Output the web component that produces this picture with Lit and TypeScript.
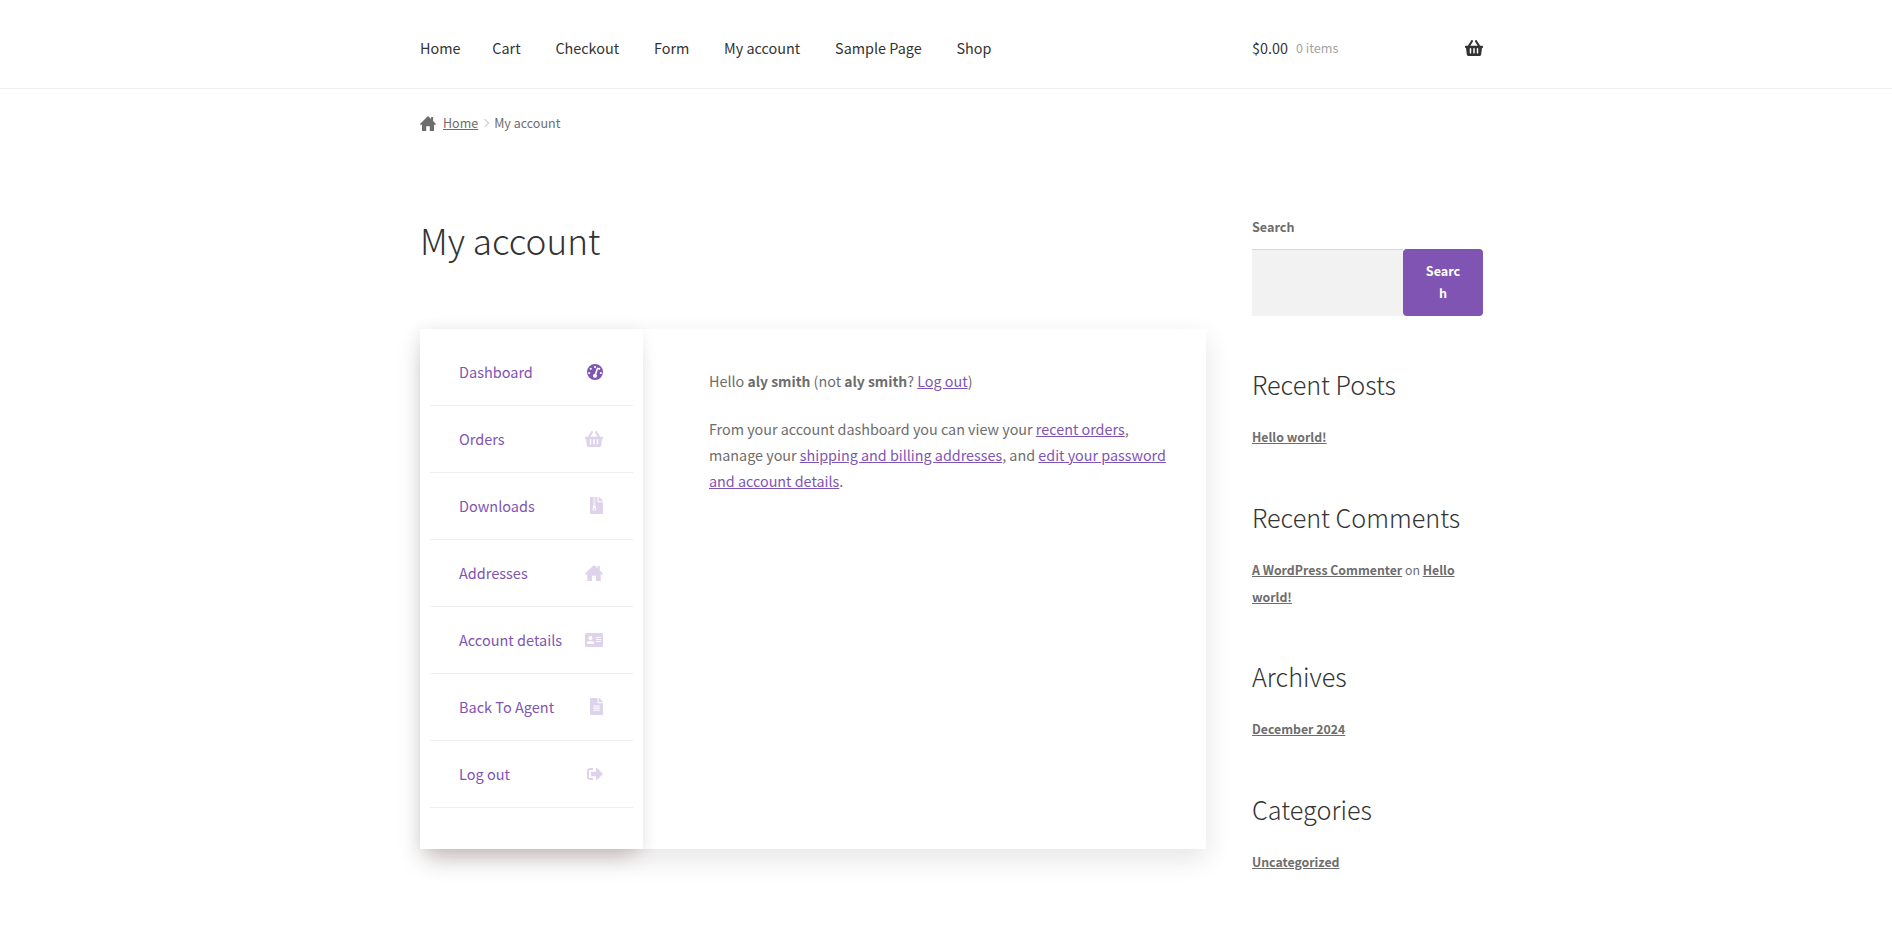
import { LitElement, css, html, svg } from "lit";
import { customElement } from "lit/decorators.js";

// font awesome 5 solid glyphs, home and gauge redrawn to match the older set
const ICONS: Record<string, { vb: string; d: any }> = {
  home: {
    vb: "0 32 576 448",
    d: svg`<path d="M288 32L400 124V60h72v122L576 268l-34 42-38-31V480H352V336H224V480H72V279l-38 31L0 268z"/>`,
  },
  basket: {
    vb: "0 32 576 448",
    d: svg`<path d="M576 216v16c0 13.255-10.745 24-24 24h-8l-26.113 182.788C514.509 462.435 494.257 480 470.37 480H105.63c-23.887 0-44.139-17.565-47.518-41.212L32 256h-8c-13.255 0-24-10.745-24-24v-16c0-13.255 10.745-24 24-24h67.341l106.78-146.821c10.395-14.292 30.407-17.453 44.701-7.058 14.293 10.395 17.453 30.408 7.058 44.701L170.477 192h235.046L326.12 82.821c-10.395-14.292-7.234-34.306 7.059-44.701 14.291-10.395 34.306-7.235 44.701 7.058L484.659 192H552c13.255 0 24 10.745 24 24zM312 392V280c0-13.255-10.745-24-24-24s-24 10.745-24 24v112c0 13.255 10.745 24 24 24s24-10.745 24-24zm112 0V280c0-13.255-10.745-24-24-24s-24 10.745-24 24v112c0 13.255 10.745 24 24 24s24-10.745 24-24zm-224 0V280c0-13.255-10.745-24-24-24s-24 10.745-24 24v112c0 13.255 10.745 24 24 24s24-10.745 24-24z"/>`,
  },
  gauge: {
    vb: "0 0 512 512",
    d: svg`<path fill-rule="evenodd" d="M256 0a256 256 0 1 0 0 512a256 256 0 1 0 0-512zM256 64a34 34 0 1 1 0 68a34 34 0 1 1 0-68zM120 120a34 34 0 1 1 0 68a34 34 0 1 1 0-68zM70 256a34 34 0 1 1 0 68a34 34 0 1 1 0-68zM442 256a34 34 0 1 1 0 68a34 34 0 1 1 0-68zM392 120a34 34 0 1 1 0 68a34 34 0 1 1 0-68zM345 112c14 5 21 20 16 33l-61 180c14 13 22 31 22 51c0 39-29 66-66 66s-66-29-66-66c0-34 26-62 60-65l62-183c5-13 20-21 33-16z"/>`,
  },
  archive: {
    vb: "0 0 384 512",
    d: svg`<path d="M377 105L279.1 7c-4.5-4.5-10.6-7-17-7H256v128h128v-6.1c0-6.3-2.5-12.4-7-16.9zM128.4 336c-17.9 0-32.4 12.1-32.4 27 0 15 14.6 27 32.5 27s32.4-12.1 32.4-27-14.6-27-32.5-27zM224 136V0h-63.6v32h-32V0H24C10.7 0 0 10.7 0 24v464c0 13.3 10.7 24 24 24h336c13.3 0 24-10.7 24-24V160H248c-13.2 0-24-10.8-24-24zM95.9 32h32v32h-32zm32.3 384c-33.2 0-58-30.4-51.4-62.9L96.4 256v-32h32v-32h-32v-32h32v-32h-32V96h32V64h32v32h-32v32h32v32h-32v32h32v32h-32v32h22.1c5.7 0 10.7 4.1 11.8 9.7l17.3 87.7c6.4 32.4-18.4 62.6-51.4 62.6z"/>`,
  },
  card: {
    vb: "0 0 576 512",
    d: svg`<path d="M528 32H48C21.5 32 0 53.5 0 80v352c0 26.5 21.5 48 48 48h480c26.5 0 48-21.5 48-48V80c0-26.5-21.5-48-48-48zm-352 96c35.3 0 64 28.7 64 64s-28.7 64-64 64-64-28.7-64-64 28.7-64 64-64zm112 236.8c0 10.6-10 19.2-22.4 19.2H86.4C74 384 64 375.4 64 364.8v-19.2c0-31.8 30.1-57.6 67.2-57.6h5c12.3 5.1 25.7 8 39.8 8s27.6-2.9 39.8-8h5c37.1 0 67.2 25.8 67.2 57.6v19.2zM512 312c0 4.4-3.6 8-8 8H360c-4.4 0-8-3.6-8-8v-16c0-4.4 3.6-8 8-8h144c4.4 0 8 3.6 8 8v16zm0-64c0 4.4-3.6 8-8 8H360c-4.4 0-8-3.6-8-8v-16c0-4.4 3.6-8 8-8h144c4.4 0 8 3.6 8 8v16zm0-64c0 4.4-3.6 8-8 8H360c-4.4 0-8-3.6-8-8v-16c0-4.4 3.6-8 8-8h144c4.4 0 8 3.6 8 8v16z"/>`,
  },
  file: {
    vb: "0 0 384 512",
    d: svg`<path d="M224 136V0H24C10.7 0 0 10.7 0 24v464c0 13.3 10.7 24 24 24h336c13.3 0 24-10.7 24-24V160H248c-13.2 0-24-10.8-24-24zm64 236c0 6.6-5.4 12-12 12H108c-6.6 0-12-5.4-12-12v-8c0-6.6 5.4-12 12-12h168c6.6 0 12 5.4 12 12v8zm0-64c0 6.6-5.4 12-12 12H108c-6.6 0-12-5.4-12-12v-8c0-6.6 5.4-12 12-12h168c6.6 0 12 5.4 12 12v8zm0-72v8c0 6.6-5.4 12-12 12H108c-6.6 0-12-5.4-12-12v-8c0-6.6 5.4-12 12-12h168c6.6 0 12 5.4 12 12zm96-114.1v6.1H256V0h6.1c6.4 0 12.5 2.5 17 7l97.9 98c4.5 4.5 7 10.6 7 16.9z"/>`,
  },
  signout: {
    vb: "0 0 512 512",
    d: svg`<path d="M497 273L329 441c-15 15-41 4.5-41-17v-96H152c-13.3 0-24-10.7-24-24v-96c0-13.3 10.7-24 24-24h136V88c0-21.4 25.9-32 41-17l168 168c9.3 9.4 9.3 24.6 0 34zM192 436v-40c0-6.6-5.4-12-12-12H96c-17.7 0-32-14.3-32-32V160c0-17.7 14.3-32 32-32h84c6.6 0 12-5.4 12-12V76c0-6.6-5.4-12-12-12H96c-53 0-96 43-96 96v192c0 53 43 96 96 96h84c6.6 0 12-5.4 12-12z"/>`,
  },
};

const icon = (name: string) =>
  html`<svg class="icon ${name}" viewBox=${ICONS[name].vb} preserveAspectRatio="none" fill="currentColor">${ICONS[name].d}</svg>`;

const TOP_LINKS = ["Home", "Cart", "Checkout", "Form", "My account", "Sample Page", "Shop"];

const ACCOUNT_LINKS = [
  { label: "Dashboard", icon: "gauge", active: true },
  { label: "Orders", icon: "basket" },
  { label: "Downloads", icon: "archive" },
  { label: "Addresses", icon: "home" },
  { label: "Account details", icon: "card" },
  { label: "Back To Agent", icon: "file" },
  { label: "Log out", icon: "signout" },
];

@customElement("app-root")
export class AppRoot extends LitElement {
  static styles = css`
    :host {
      display: block;
      min-height: 952px;
      background: #fff;
      color: #6d6d6d;
      font-family: "Noto Sans CJK SC", "Liberation Sans", sans-serif;
      font-size: 14.4px;
      line-height: 26px;
    }
    a {
      color: inherit;
    }
    .wrap {
      width: 1063px;
      margin-left: 420px;
    }
    .masthead {
      height: 88px;
      border-bottom: 1px solid #eeeeee;
    }
    .masthead .wrap {
      display: flex;
      justify-content: space-between;
      box-sizing: border-box;
      height: 88px;
      padding-top: 8px;
      align-items: center;
    }
    .top-nav {
      display: flex;
      gap: 34.8px;
      color: #333;
    }
    .top-nav a {
      text-decoration: none;
    }
    .top-nav a:first-child {
      margin-right: -3px;
    }
    .mini-cart {
      width: 231px;
      display: flex;
      align-items: center;
      color: #333;
    }
    .mini-cart .count {
      margin-left: 8px;
      font-size: 12.6px;
      color: #a3a3a3;
    }
    .mini-cart .icon {
      width: 18px;
      height: 16px;
      margin-left: auto;
    }
    .crumbs {
      display: flex;
      align-items: center;
      padding-top: 21px;
      font-size: 12.5px;
      line-height: 26px;
    }
    .crumbs .icon {
      width: 16px;
      height: 15px;
      margin-right: 7px;
    }
    .crumbs .sep {
      width: 5px;
      height: 5px;
      margin: 0 6px 0 4px;
      border-top: 1px solid #c9c9c9;
      border-right: 1px solid #c9c9c9;
      transform: rotate(45deg);
    }
    .columns {
      display: flex;
      justify-content: space-between;
      padding-top: 77px;
    }
    .main {
      width: 786px;
    }
    h1 {
      margin: 0;
      font-size: 35.2px;
      line-height: 54px;
      font-weight: 300;
      color: #333;
    }
    .account {
      display: flex;
      margin-top: 62px;
      height: 520px;
      background: #fff;
      box-shadow: 0 10px 24px rgba(60, 40, 40, 0.12);
    }
    .account-nav {
      width: 223px;
      box-sizing: border-box;
      padding: 10px 10px 0;
      background: #fff;
      box-shadow: 0 0 14px rgba(0, 0, 0, 0.06), 0 16px 20px -8px rgba(90, 50, 50, 0.22);
      color: #7f54b3;
      position: relative;
    }
    .account-nav a {
      display: flex;
      align-items: center;
      justify-content: space-between;
      box-sizing: border-box;
      height: 67px;
      padding: 0 30px 1px 29px;
      border-bottom: 1px solid #eeeeee;
      text-decoration: none;
      font-size: 14.5px;
    }
    .account-nav .icon {
      width: 18px;
      height: 16px;
      opacity: 0.25;
    }
    .account-nav .archive,
    .account-nav .file {
      width: 13px;
      height: 17px;
    }
    .account-nav .gauge,
    .account-nav .signout {
      width: 16px;
    }
    .account-nav .active .icon {
      opacity: 1;
    }
    .account-body {
      flex: 1;
      padding: 39px 30px 0 66px;
      font-size: 14.35px;
    }
    .account-body p {
      margin: 0 0 22px;
    }
    .account-body a {
      color: #7f54b3;
    }
    .account-body strong {
      font-size: 13.9px;
      font-weight: 600;
    }
    .sidebar {
      width: 231px;
      font-size: 12.3px;
    }
    .sidebar label {
      display: block;
      font-size: 12.6px;
      font-weight: 700;
      line-height: 26px;
      padding-top: 1px;
    }
    .search {
      display: flex;
      margin-top: 9px;
      height: 67px;
    }
    .search input {
      flex: 1;
      min-width: 0;
      border: 0;
      border-top: 1px solid #d6d6d6;
      background: #f2f2f2;
      padding: 0;
    }
    .search button {
      width: 80px;
      border: 0;
      border-radius: 4px;
      background: #7f54b3;
      color: #fff;
      font: 700 12.6px/22px "Noto Sans CJK SC", "Liberation Sans", sans-serif;
      padding: 0 20px 2px;
      word-break: break-all;
    }
    h2 {
      margin: 0;
      font-size: 25.2px;
      line-height: 34px;
      font-weight: 300;
      color: #333;
    }
    .widget {
      margin-top: 48.5px;
    }
    .search + .widget {
      margin-top: 51px;
    }
    .widget .links {
      margin: 23px 0 0;
      line-height: 27px;
    }
    .widget .links a {
      font-weight: 600;
    }
  `;

  render() {
    return html`
      <header class="masthead">
        <div class="wrap">
          <nav class="top-nav">${TOP_LINKS.map((l) => html`<a href="#">${l}</a>`)}</nav>
          <div class="mini-cart">
            <span>$0.00</span><span class="count">0 items</span>${icon("basket")}
          </div>
        </div>
      </header>
      <div class="wrap">
        <div class="crumbs">
          ${icon("home")}<a href="#">Home</a><span class="sep"></span><span>My account</span>
        </div>
        <div class="columns">
          <main class="main">
            <h1>My account</h1>
            <div class="account">
              <nav class="account-nav">
                ${ACCOUNT_LINKS.map(
                  (l) => html`<a href="#" class=${l.active ? "active" : ""}>${l.label}${icon(l.icon)}</a>`
                )}
              </nav>
              <div class="account-body">
                <p>Hello <strong>aly smith</strong> (not <strong>aly smith</strong>? <a href="#">Log out</a>)</p>
                <p>
                  From your account dashboard you can view your <a href="#">recent orders</a>, manage your
                  <a href="#">shipping and billing addresses</a>, and
                  <a href="#">edit your password and account details</a>.
                </p>
              </div>
            </div>
          </main>
          <aside class="sidebar">
            <label>Search</label>
            <div class="search">
              <input type="text" />
              <button>Search</button>
            </div>
            <div class="widget">
              <h2>Recent Posts</h2>
              <p class="links"><a href="#">Hello world!</a></p>
            </div>
            <div class="widget">
              <h2>Recent Comments</h2>
              <p class="links"><a href="#">A WordPress Commenter</a> on <a href="#">Hello world!</a></p>
            </div>
            <div class="widget">
              <h2>Archives</h2>
              <p class="links"><a href="#">December 2024</a></p>
            </div>
            <div class="widget">
              <h2>Categories</h2>
              <p class="links"><a href="#">Uncategorized</a></p>
            </div>
          </aside>
        </div>
      </div>
    `;
  }
}
